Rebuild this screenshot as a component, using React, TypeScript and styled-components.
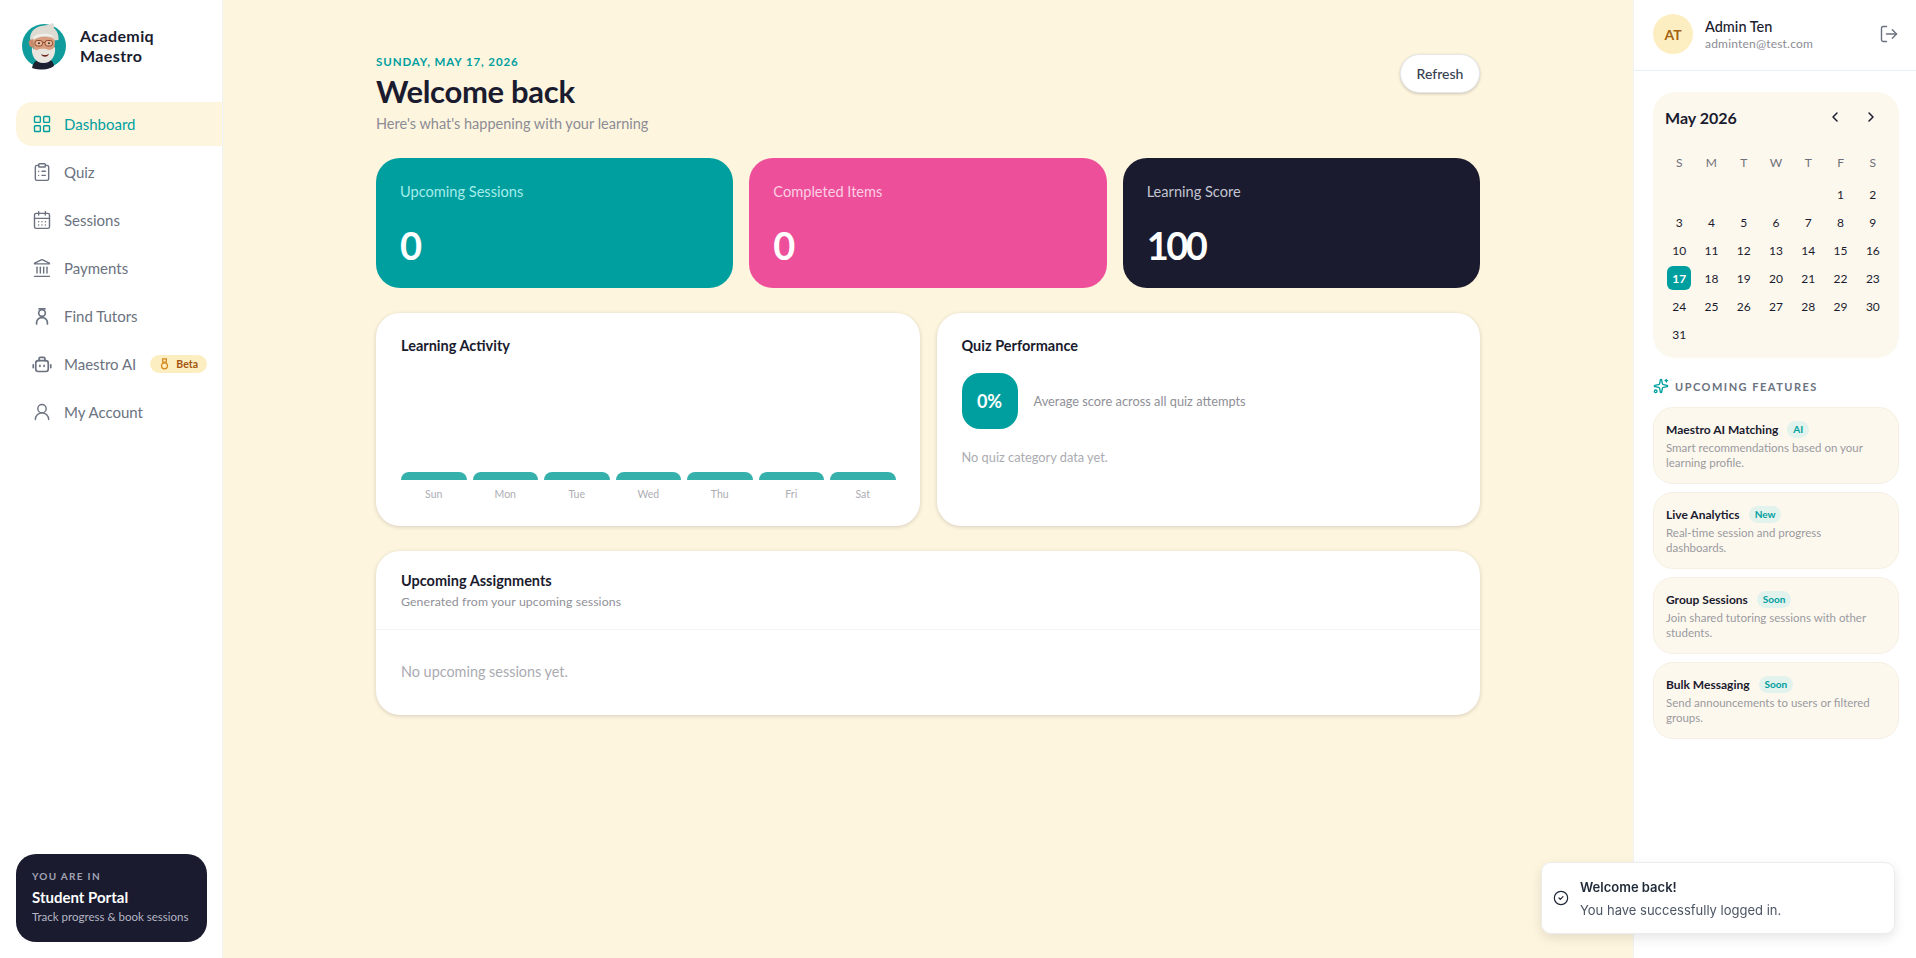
import { FC, ReactNode } from 'react';
import styled, { createGlobalStyle } from 'styled-components';
import {
  CalendarDays,
  ChevronLeft,
  ChevronRight,
  CircleCheck,
  ClipboardList,
  Landmark,
  LayoutGrid,
  LogOut,
  Sparkles,
  UserRound,
} from 'lucide-react';

const TEAL = '#009f9f';
const INK = '#1a1b2e';
const CREAM = '#fef5df';

const FONT = `Lato, "Noto Sans", sans-serif`;

const GlobalStyle = createGlobalStyle`
  * {
    box-sizing: border-box;
  }
  html, body {
    margin: 0;
    height: 100%;
    overflow: hidden;
  }
  body {
    font-family: ${FONT};
    color: ${INK};
    background: ${CREAM};
  }
`;

const weekDays = ['Sun', 'Mon', 'Tue', 'Wed', 'Thu', 'Fri', 'Sat'];
const calendarHead = ['S', 'M', 'T', 'W', 'T', 'F', 'S'];
const leadingBlanks = 5;
const today = 17;

const features = [
  { title: 'Maestro AI Matching', tag: 'AI', text: 'Smart recommendations based on your learning profile.' },
  { title: 'Live Analytics', tag: 'New', text: 'Real-time session and progress dashboards.' },
  { title: 'Group Sessions', tag: 'Soon', text: 'Join shared tutoring sessions with other students.' },
  { title: 'Bulk Messaging', tag: 'Soon', text: 'Send announcements to users or filtered groups.' },
];

const TutorIcon: FC = () => (
  <svg width="20" height="20" viewBox="0 0 24 24" fill="none" stroke="currentColor" strokeWidth="2" strokeLinecap="round" strokeLinejoin="round">
    <path d="M8.500 3.500h7" />
    <circle cx="12" cy="8.500" r="4" />
    <path d="M5.500 21.500v-1.500a6 6 0 0 1 6-6h1a6 6 0 0 1 6 6v1.500" />
  </svg>
);

const BotIcon: FC = () => (
  <svg width="20" height="20" viewBox="0 0 24 24" fill="none" stroke="currentColor" strokeWidth="2" strokeLinecap="round" strokeLinejoin="round">
    <path d="M8.500 8V5.500A1.500 1.500 0 0 1 10 4h4a1.500 1.500 0 0 1 1.500 1.500V8" />
    <rect x="4.500" y="8" width="15" height="13" rx="3" />
    <path d="M1.500 13v3.500M22.500 13v3.500" />
    <path d="M9.500 13.500v1.500M14.500 13.500v1.500" />
  </svg>
);

const MedalIcon: FC = () => (
  <svg width="11" height="12" viewBox="0 0 12 13" fill="none" stroke="#d48a1e" strokeWidth="1.400">
    <path d="M4 1h4v3.500H4z" />
    <circle cx="6" cy="8.500" r="3.300" />
  </svg>
);

const MaestroAvatar: FC = () => (
  <svg width="46" height="48" viewBox="0 0 46 48">
    <circle cx="23" cy="24" r="22" fill="#109c9c" />
    <path d="M11 46c1-6 6-10 12-10s9 3 10 8c-3 2-7 3.500-11 3.500-3.500 0-8-.5-11-1.500z" fill="#1d2030" />
    <path d="M9 17C9 9 15 4 23 3.500c3-.2 6-1 9-2.500 1 2 1.200 3.500.8 5C36 8.500 38 13 37.500 18l-27 3z" fill="#dedbd3" />
    <path d="M12 19c2-3 9-5 15-4 4 .6 7 2 7 5l-.8 7c-1 5-5 8-10 8s-9-3-10.300-8z" fill="#d99e80" />
    <path d="M9 18c-2 1-1.500 5 1 7l3 1-1-9z" fill="#c98a6c" />
    <path d="M11 25c1 2 3 3 5 3 3-1.500 8-2 12 0 2 0 4-1 6-3 1 8-3 16-11.500 16S10 33 11 25z" fill="#e9e6df" />
    <path d="M20 32c2 1.400 6 1.400 8-.3-.5 2-2 3-4 3s-3.500-1-4-2.700z" fill="#6e2c22" />
    <path d="M12 15c3-3 10-4 15-3 3 .5 5 1.500 6 3-4-.8-6-1-9-1-4 0-8 1-10 3z" fill="#f1efe9" />
    <rect x="14" y="18.500" width="7.500" height="5.500" rx="2.200" fill="#e8b79c" stroke="#8e4a2b" strokeWidth="1" />
    <rect x="24" y="18.500" width="7.500" height="5.500" rx="2.200" fill="#e8b79c" stroke="#8e4a2b" strokeWidth="1" />
    <path d="M21.500 20.500h2.500" stroke="#8e4a2b" strokeWidth="1" />
    <circle cx="18" cy="21.200" r=".9" fill="#2b2320" />
    <circle cx="28" cy="21.200" r=".9" fill="#2b2320" />
  </svg>
);

const NavItem: FC<{ icon: ReactNode; label: string; active?: boolean; badge?: boolean }> = ({ icon, label, active, badge }) => (
  <NavRow $active={active}>
    <NavIcon>{icon}</NavIcon>
    <span>{label}</span>
    {badge && (
      <BetaBadge>
        <MedalIcon />
        Beta
      </BetaBadge>
    )}
  </NavRow>
);

const App: FC = () => {
  const days: (number | null)[] = [
    ...Array.from({ length: leadingBlanks }, () => null),
    ...Array.from({ length: 31 }, (_, i) => i + 1),
  ];

  return (
    <>
      <GlobalStyle />
      <Shell>
        <Sidebar>
          <Brand>
            <MaestroAvatar />
            <BrandName>
              Academiq
              <br />
              Maestro
            </BrandName>
          </Brand>
          <Nav>
            <NavItem active icon={<LayoutGrid size={20} strokeWidth={1.7} />} label="Dashboard" />
            <NavItem icon={<ClipboardList size={20} strokeWidth={1.7} />} label="Quiz" />
            <NavItem icon={<CalendarDays size={20} strokeWidth={1.7} />} label="Sessions" />
            <NavItem icon={<Landmark size={20} strokeWidth={1.7} />} label="Payments" />
            <NavItem icon={<TutorIcon />} label="Find Tutors" />
            <NavItem icon={<BotIcon />} label="Maestro AI" badge />
            <NavItem icon={<UserRound size={20} strokeWidth={1.7} />} label="My Account" />
          </Nav>
          <PortalCard>
            <PortalEyebrow>YOU ARE IN</PortalEyebrow>
            <PortalTitle>Student Portal</PortalTitle>
            <PortalText>Track progress &amp; book sessions</PortalText>
          </PortalCard>
        </Sidebar>

        <Main>
          <Content>
            <PageHeader>
              <div>
                <DateLine>SUNDAY, MAY 17, 2026</DateLine>
                <Title>Welcome back</Title>
                <Subtitle>Here's what's happening with your learning</Subtitle>
              </div>
              <RefreshButton>Refresh</RefreshButton>
            </PageHeader>

            <StatRow>
              <StatCard $bg={TEAL}>
                <StatLabel $color="#a5ecea">Upcoming Sessions</StatLabel>
                <StatValue>0</StatValue>
              </StatCard>
              <StatCard $bg="#ee4f9a">
                <StatLabel $color="#fbd0e4">Completed Items</StatLabel>
                <StatValue>0</StatValue>
              </StatCard>
              <StatCard $bg={INK}>
                <StatLabel $color="#c3c4d0">Learning Score</StatLabel>
                <StatValue>100</StatValue>
              </StatCard>
            </StatRow>

            <ChartRow>
              <Panel>
                <PanelTitle>Learning Activity</PanelTitle>
                <Chart>
                  {weekDays.map((day) => (
                    <ChartColumn key={day}>
                      <ChartBar />
                      <ChartLabel>{day}</ChartLabel>
                    </ChartColumn>
                  ))}
                </Chart>
              </Panel>
              <Panel>
                <PanelTitle>Quiz Performance</PanelTitle>
                <ScoreRow>
                  <ScoreBadge>0%</ScoreBadge>
                  <ScoreText>Average score across all quiz attempts</ScoreText>
                </ScoreRow>
                <EmptyNote>No quiz category data yet.</EmptyNote>
              </Panel>
            </ChartRow>

            <AssignmentsPanel>
              <AssignmentsHeader>
                <PanelTitle>Upcoming Assignments</PanelTitle>
                <AssignmentsSub>Generated from your upcoming sessions</AssignmentsSub>
              </AssignmentsHeader>
              <AssignmentsBody>No upcoming sessions yet.</AssignmentsBody>
            </AssignmentsPanel>
          </Content>
        </Main>

        <RightPanel>
          <UserBar>
            <UserAvatar>AT</UserAvatar>
            <UserInfo>
              <UserName>Admin Ten</UserName>
              <UserEmail>adminten@test.com</UserEmail>
            </UserInfo>
            <LogOut size={20} strokeWidth={1.7} color="#6b7280" />
          </UserBar>
          <RightBody>
            <Calendar>
              <CalendarHeader>
                <CalendarTitle>May 2026</CalendarTitle>
                <CalendarNav>
                  <ChevronLeft size={16} strokeWidth={2.2} />
                  <ChevronRight size={16} strokeWidth={2.2} />
                </CalendarNav>
              </CalendarHeader>
              <CalendarGrid>
                {calendarHead.map((d, i) => (
                  <WeekCell key={i}>{d}</WeekCell>
                ))}
              </CalendarGrid>
              <CalendarGrid>
                {days.map((d, i) => (
                  <DayCell key={i}>{d && <DayNumber $today={d === today}>{d}</DayNumber>}</DayCell>
                ))}
              </CalendarGrid>
            </Calendar>

            <FeaturesHeading>
              <Sparkles size={16} strokeWidth={2} color={TEAL} />
              UPCOMING FEATURES
            </FeaturesHeading>
            <FeatureList>
              {features.map((f) => (
                <FeatureCard key={f.title}>
                  <FeatureTitleRow>
                    <FeatureTitle>{f.title}</FeatureTitle>
                    <FeatureTag>{f.tag}</FeatureTag>
                  </FeatureTitleRow>
                  <FeatureText>{f.text}</FeatureText>
                </FeatureCard>
              ))}
            </FeatureList>
          </RightBody>
        </RightPanel>
      </Shell>

      <Toast>
        <CircleCheck size={16} strokeWidth={1.8} color="#1f2937" />
        <div>
          <ToastTitle>Welcome back!</ToastTitle>
          <ToastText>You have successfully logged in.</ToastText>
        </div>
      </Toast>
    </>
  );
};

export default App;

const Shell = styled.div`
  display: grid;
  grid-template-columns: 223px 1fr 283px;
  height: 958px;
`;

const Sidebar = styled.aside`
  display: flex;
  flex-direction: column;
  background: #fff;
  border-right: 1px solid #eef3f5;
  padding: 22px 0 16px 16px;
`;

const Brand = styled.div`
  display: flex;
  align-items: center;
  gap: 13px;
  padding-left: 5px;
`;

const BrandName = styled.div`
  font-size: 16px;
  font-weight: 700;
  line-height: 20px;
  letter-spacing: 0.4px;
`;

const Nav = styled.nav`
  display: flex;
  flex-direction: column;
  gap: 4px;
  margin-top: 32px;
`;

const NavRow = styled.div<{ $active?: boolean }>`
  display: flex;
  align-items: center;
  height: 44px;
  padding-left: 16px;
  padding-right: 16px;
  font-size: 15px;
  color: ${(p) => (p.$active ? TEAL : '#6b7280')};
  background: ${(p) => (p.$active ? CREAM : 'transparent')};
  border-radius: 16px 0 0 16px;
`;

const NavIcon = styled.span`
  display: flex;
  width: 32px;
  flex-shrink: 0;
`;

const BetaBadge = styled.span`
  display: inline-flex;
  align-items: center;
  gap: 6px;
  margin-left: auto;
  margin-right: -1px;
  padding: 0 9px 0 9px;
  height: 18px;
  border-radius: 9px;
  background: #fdeec2;
  color: #a3540f;
  font-size: 10.500px;
  font-weight: 700;
`;

const PortalCard = styled.div`
  margin-top: auto;
  width: 191px;
  height: 88px;
  padding: 15px 16px;
  border-radius: 20px;
  background: ${INK};
`;

const PortalEyebrow = styled.div`
  font-size: 10px;
  line-height: 14px;
  letter-spacing: 1.300px;
  color: #a2a3b4;
  font-weight: 700;
`;

const PortalTitle = styled.div`
  margin-top: 5px;
  font-size: 15px;
  line-height: 18px;
  font-weight: 700;
  color: #fff;
`;

const PortalText = styled.div`
  margin-top: 3px;
  font-size: 11.500px;
  line-height: 16px;
  white-space: nowrap;
  color: #b5b6c4;
`;

const Main = styled.main`
  background: ${CREAM};
  padding-top: 54px;
`;

const Content = styled.div`
  width: 1104px;
  margin: 0 auto;
`;

const PageHeader = styled.header`
  display: flex;
  justify-content: space-between;
  align-items: flex-start;
  margin-bottom: 24px;
`;

const DateLine = styled.div`
  font-size: 11.500px;
  line-height: 16px;
  font-weight: 700;
  letter-spacing: 0.900px;
  color: ${TEAL};
`;

const Title = styled.h1`
  margin: 1px 0 3px;
  font-size: 31px;
  line-height: 40px;
  font-weight: 700;
  letter-spacing: -0.3px;
`;

const Subtitle = styled.p`
  margin: 0;
  font-size: 14.500px;
  line-height: 20px;
  color: #8b8c94;
`;

const RefreshButton = styled.button`
  width: 80px;
  height: 39px;
  padding-bottom: 2px;
  border: 1px solid #e5e7eb;
  border-radius: 20px;
  background: #fff;
  box-shadow: 0 1px 3px rgba(0, 0, 0, 0.2);
  color: #374151;
  font-family: ${FONT};
  font-size: 14px;
  font-weight: 500;
`;

const StatRow = styled.section`
  display: grid;
  grid-template-columns: repeat(3, 1fr);
  gap: 16px;
`;

const StatCard = styled.div<{ $bg: string }>`
  height: 130px;
  padding: 24px;
  border-radius: 24px;
  background: ${(p) => p.$bg};
`;

const StatLabel = styled.div<{ $color: string }>`
  font-size: 14.600px;
  line-height: 20px;
  color: ${(p) => p.$color};
`;

const StatValue = styled.div`
  margin-top: 21px;
  font-size: 38px;
  line-height: 44px;
  font-weight: 700;
  letter-spacing: -2.500px;
  color: #fff;
`;

const ChartRow = styled.section`
  display: grid;
  grid-template-columns: repeat(2, 1fr);
  gap: 17px;
  margin-top: 25px;
`;

const Panel = styled.div`
  display: flex;
  flex-direction: column;
  height: 213px;
  padding: 24px 24px 25px 25px;
  border-radius: 24px;
  background: #fff;
  box-shadow: 0 1px 4px rgba(0, 0, 0, 0.16);
`;

const PanelTitle = styled.h3`
  margin: 0;
  font-size: 14.500px;
  line-height: 18px;
  font-weight: 700;
`;

const Chart = styled.div`
  display: grid;
  grid-template-columns: repeat(7, 1fr);
  gap: 6px;
  margin-top: auto;
`;

const ChartColumn = styled.div`
  display: flex;
  flex-direction: column;
  align-items: center;
`;

const ChartBar = styled.div`
  width: 100%;
  height: 8px;
  border-radius: 8px 8px 0 0;
  background: #35b0ab;
`;

const ChartLabel = styled.span`
  margin-top: 7px;
  font-size: 10.500px;
  line-height: 14px;
  color: #adadb3;
`;

const ScoreRow = styled.div`
  display: flex;
  align-items: center;
  gap: 16px;
  margin-top: 18px;
`;

const ScoreBadge = styled.div`
  display: flex;
  align-items: center;
  justify-content: center;
  width: 56px;
  height: 56px;
  border-radius: 18px;
  background: ${TEAL};
  color: #fff;
  font-size: 18px;
  font-weight: 700;
`;

const ScoreText = styled.span`
  font-size: 12.800px;
  color: #8f9097;
`;

const EmptyNote = styled.p`
  margin: 20px 0 0;
  font-size: 12.800px;
  line-height: 16px;
  color: #aaabb1;
`;

const AssignmentsPanel = styled.section`
  display: flex;
  flex-direction: column;
  height: 164px;
  margin-top: 25px;
  border-radius: 24px;
  background: #fff;
  box-shadow: 0 1px 4px rgba(0, 0, 0, 0.16);
`;

const AssignmentsHeader = styled.div`
  padding: 21px 25px 19px;
  border-bottom: 1px solid #f4f4f2;
`;

const AssignmentsSub = styled.div`
  margin-top: 4px;
  font-size: 12.300px;
  line-height: 16px;
  letter-spacing: 0.100px;
  color: #8f9097;
`;

const AssignmentsBody = styled.div`
  display: flex;
  align-items: center;
  flex: 1;
  padding: 0 0 2px 25px;
  font-size: 14.400px;
  color: #aaabb1;
`;

const RightPanel = styled.aside`
  background: #fff;
  border-left: 1px solid #eef3f5;
`;

const UserBar = styled.div`
  display: flex;
  align-items: center;
  height: 71px;
  padding: 0 17px 2px 19px;
  border-bottom: 1px solid #e9f0f3;
`;

const UserAvatar = styled.div`
  display: flex;
  align-items: center;
  justify-content: center;
  width: 40px;
  height: 40px;
  border-radius: 50%;
  background: #fdeec2;
  color: #a3620f;
  font-size: 14px;
  font-weight: 700;
`;

const UserInfo = styled.div`
  flex: 1;
  margin-left: 12px;
`;

const UserName = styled.div`
  font-size: 14.500px;
  line-height: 19px;
  font-weight: 500;
`;

const UserEmail = styled.div`
  font-size: 12px;
  line-height: 16px;
  letter-spacing: 0.200px;
  color: #8b8c94;
`;

const RightBody = styled.div`
  padding: 21px 17px 0 19px;
`;

const Calendar = styled.section`
  height: 266px;
  padding: 15px 10px 0;
  border-radius: 22px;
  background: #fdf8ee;
`;

const CalendarHeader = styled.div`
  display: flex;
  align-items: center;
  justify-content: space-between;
  padding: 0 10px 0 2px;
  height: 20px;
  margin-bottom: 21px;
`;

const CalendarTitle = styled.div`
  font-size: 16px;
  font-weight: 700;
`;

const CalendarNav = styled.div`
  display: flex;
  gap: 20px;
`;

const CalendarGrid = styled.div`
  display: grid;
  grid-template-columns: repeat(7, 1fr);
  grid-auto-rows: 28px;
  margin-bottom: 4px;
`;

const WeekCell = styled.div`
  display: flex;
  align-items: center;
  justify-content: center;
  font-size: 12px;
  color: #6f7078;
`;

const DayCell = styled.div`
  display: flex;
  align-items: center;
  justify-content: center;
`;

const DayNumber = styled.span<{ $today?: boolean }>`
  display: flex;
  align-items: center;
  justify-content: center;
  width: 24px;
  height: 24px;
  border-radius: 6px;
  font-size: 12px;
  font-weight: ${(p) => (p.$today ? 700 : 400)};
  color: ${(p) => (p.$today ? '#fff' : INK)};
  background: ${(p) => (p.$today ? TEAL : 'transparent')};
`;

const FeaturesHeading = styled.h4`
  display: flex;
  align-items: center;
  gap: 6px;
  height: 16px;
  margin: 20px 0 13px;
  font-size: 11px;
  font-weight: 700;
  letter-spacing: 1.500px;
  color: #6b7280;
`;

const FeatureList = styled.div`
  display: flex;
  flex-direction: column;
  gap: 8px;
`;

const FeatureCard = styled.article`
  height: 77px;
  padding: 12px 20px 0 12px;
  border: 1px solid #f6f0e3;
  border-radius: 20px;
  background: #fdf8ee;
`;

const FeatureTitleRow = styled.div`
  display: flex;
  align-items: center;
  gap: 9px;
  height: 18px;
`;

const FeatureTitle = styled.div`
  font-size: 12px;
  font-weight: 700;
`;

const FeatureTag = styled.span`
  padding: 0 6px;
  height: 17px;
  line-height: 16px;
  border-radius: 9px;
  background: #e2f2ec;
  color: ${TEAL};
  font-size: 10px;
  font-weight: 700;
`;

const FeatureText = styled.p`
  margin: 2px 0 0;
  font-size: 11.500px;
  line-height: 15px;
  color: #9a9a9e;
`;

const Toast = styled.div`
  position: fixed;
  left: 1541px;
  top: 862px;
  display: flex;
  align-items: center;
  gap: 11px;
  width: 354px;
  height: 72px;
  padding: 0 16px 0 11px;
  border: 1px solid #ececec;
  border-radius: 10px;
  background: #fff;
  box-shadow: 0 4px 12px rgba(0, 0, 0, 0.1);
  font-family: Inter, sans-serif;
`;

const ToastTitle = styled.div`
  font-size: 13px;
  line-height: 20px;
  font-weight: 600;
  color: #1f2937;
`;

const ToastText = styled.div`
  margin-top: 3px;
  font-size: 13px;
  line-height: 20px;
  color: #4b5563;
`;
